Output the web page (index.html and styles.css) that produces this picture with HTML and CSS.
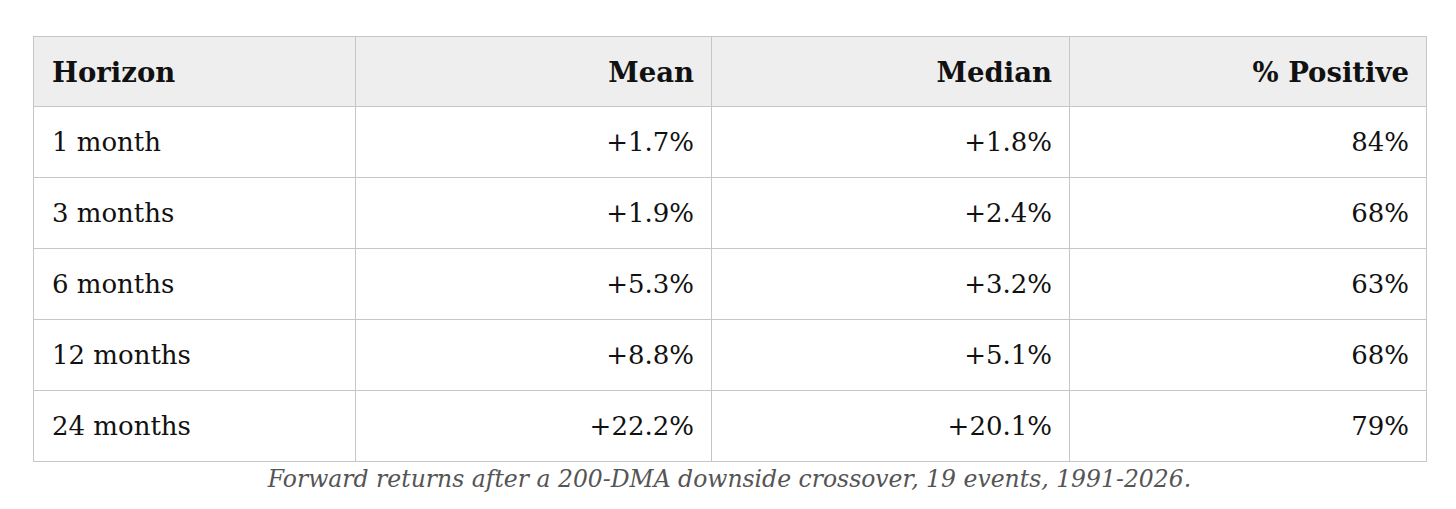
FILE: index.html
```html
<!DOCTYPE html>
<html>
<head>
<meta charset="utf-8">
<link rel="stylesheet" href="styles.css">
</head>
<body>
<figure class="fig">
  <table class="data">
    <colgroup>
      <col class="c1"><col class="c2"><col class="c3"><col class="c4">
    </colgroup>
    <thead>
      <tr><th class="l">Horizon</th><th>Mean</th><th>Median</th><th>% Positive</th></tr>
    </thead>
    <tbody>
      <tr><td class="l">1 month</td><td>+1.7%</td><td>+1.8%</td><td>84%</td></tr>
      <tr><td class="l">3 months</td><td>+1.9%</td><td>+2.4%</td><td>68%</td></tr>
      <tr><td class="l">6 months</td><td>+5.3%</td><td>+3.2%</td><td>63%</td></tr>
      <tr><td class="l">12 months</td><td>+8.8%</td><td>+5.1%</td><td>68%</td></tr>
      <tr><td class="l">24 months</td><td>+22.2%</td><td>+20.1%</td><td>79%</td></tr>
    </tbody>
  </table>
  <figcaption class="cap">Forward returns after a 200-DMA downside crossover, 19 events, 1991-2026.</figcaption>
</figure>
</body>
</html>
```
FILE: styles.css
```css
html, body {
  margin: 0;
  padding: 0;
  background: #fff;
}
.fig {
  margin: 0;
  padding: 36px 0 0 33px;
  width: 1393px;
  font-family: "DejaVu Serif", "Liberation Serif", serif;
}
.data {
  width: 1393px;
  border-collapse: collapse;
  table-layout: fixed;
  border: 1px solid #c6c6c6;
}
.c1 { width: 322px; }
.c2 { width: 356px; }
.c3 { width: 358px; }
.c4 { width: 357px; }
.data th, .data td {
  border: 1px solid #c6c6c6;
  height: 71px;
  box-sizing: border-box;
  padding: 0 17px 0 18px;
  text-align: right;
  font-size: 26px;
  color: #111;
  vertical-align: middle;
}
.data th {
  height: 70px;
  background: #eeeeee;
  font-weight: bold;
  font-size: 27.5px;
}
.data .l { text-align: left; }
.cap {
  text-align: center;
  font-style: italic;
  font-size: 23.5px;
  color: #555;
  margin-top: 3px;
}
```
